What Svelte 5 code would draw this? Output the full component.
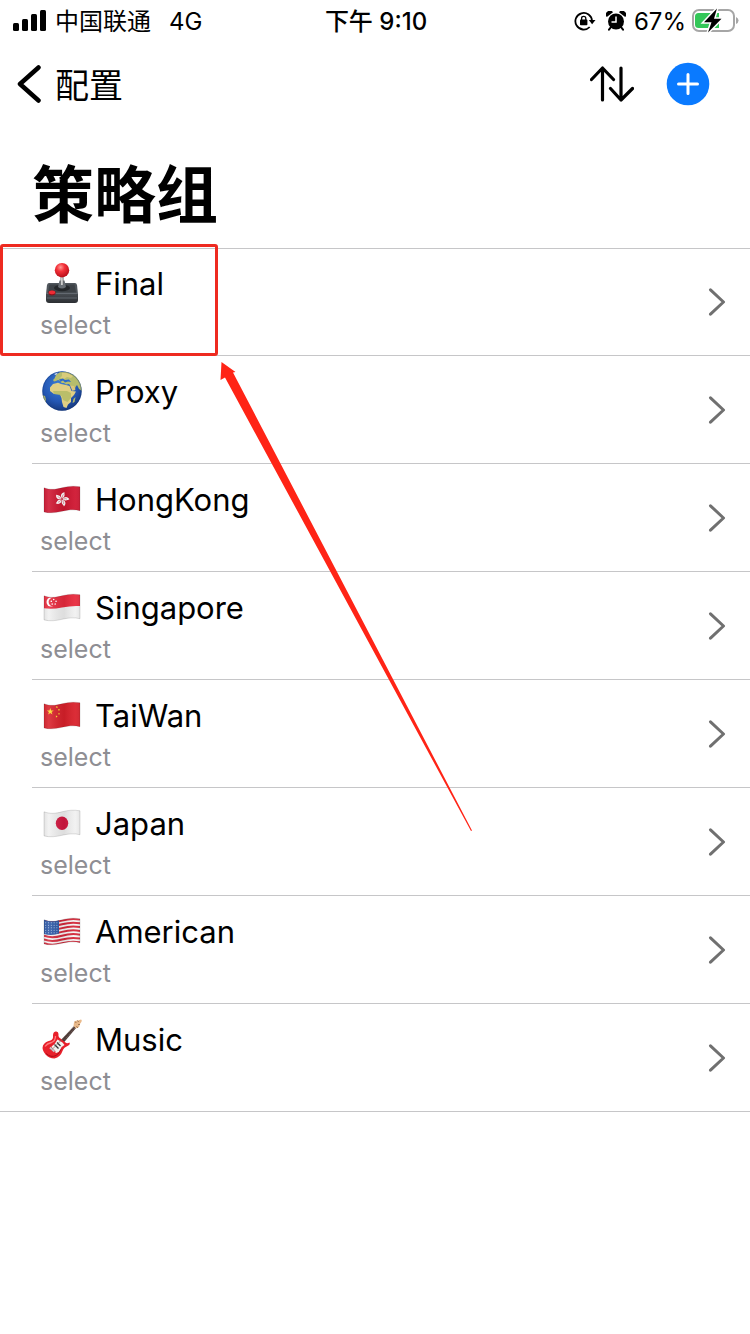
<script>
  const groups = [
    { name: 'Final', type: 'select', icon: 'joystick' },
    { name: 'Proxy', type: 'select', icon: 'globe' },
    { name: 'HongKong', type: 'select', icon: 'hk' },
    { name: 'Singapore', type: 'select', icon: 'sg' },
    { name: 'TaiWan', type: 'select', icon: 'cn' },
    { name: 'Japan', type: 'select', icon: 'jp' },
    { name: 'American', type: 'select', icon: 'us' },
    { name: 'Music', type: 'select', icon: 'guitar' }
  ];

  const flagShape =
    'M4 8.8C10 11.1 16 10.500 22 8.8S34 6.7 40 7.8V31.7C34 30.1 28 30.9 22 32.3S10 34.500 4 32.9Z';
  const star = 'M0-1L.24-.31L.95-.31L.38.12L.59.81L0 .4L-.59.81L-.38.12L-.95-.31L-.24-.31Z';
  const petals = [0, 72, 144, 216, 288];
  const stripes = [0, 1, 2, 3, 4, 5, 6];
  const starRows = [0, 1, 2, 3, 4];
  const starCols = [0, 1, 2, 3, 4];
</script>

{#snippet joystick()}
  <defs>
    <radialGradient id="ball" cx=".4" cy=".3" r=".7">
      <stop offset="0" stop-color="#ff9a94" />
      <stop offset=".4" stop-color="#f4323a" />
      <stop offset="1" stop-color="#b80d18" />
    </radialGradient>
    <linearGradient id="stick">
      <stop offset="0" stop-color="#777" />
      <stop offset=".45" stop-color="#eee" />
      <stop offset="1" stop-color="#666" />
    </linearGradient>
    <linearGradient id="front" x2="0" y2="1">
      <stop offset="0" stop-color="#4a4f55" />
      <stop offset="1" stop-color="#2c2f33" />
    </linearGradient>
  </defs>
  <path d="M9 20H35Q36.500 20 37 22L38 31H6L7 22Q7.500 20 9 20Z" fill="#50565c" />
  <path d="M9.500 21.500H34.500L36 29.500H8Z" fill="#3d4247" />
  <path d="M6 30H38V37Q38 40 35 40H9Q6 40 6 37Z" fill="url(#front)" />
  <path d="M6 30.500H38M7 35H37" stroke="#6b7178" stroke-width=".8" />
  <ellipse cx="22" cy="25" rx="8" ry="3.200" fill="#24272a" />
  <path d="M19.500 17.500H24.500L26 24Q22 27 18 24Z" fill="#686e74" />
  <path d="M20.500 12H23.500V22H20.500Z" fill="url(#stick)" />
  <circle cx="22" cy="7.200" r="7.200" fill="url(#ball)" />
  <ellipse cx="12" cy="30" rx="3.600" ry="2.400" fill="#8f1019" />
  <ellipse cx="12" cy="29.300" rx="3.200" ry="1.900" fill="#ef2c35" />
{/snippet}

{#snippet globe()}
  <defs>
    <radialGradient id="sea" cx=".45" cy=".35" r=".65">
      <stop offset="0" stop-color="#3d7fd6" />
      <stop offset=".65" stop-color="#2457b4" />
      <stop offset="1" stop-color="#173a80" />
    </radialGradient>
    <clipPath id="world"><circle cx="22" cy="20" r="19.700" /></clipPath>
  </defs>
  <circle cx="22" cy="20" r="19.700" fill="url(#sea)" />
  <g clip-path="url(#world)">
    <path d="M14.500 7.500L16 4L20 1L28 1L36 5L41 12L42 20L39 18L37 14L35.500 16L34.500 20L33 16L30.500 15L29 13L26 13.500L24 12L21.500 12L20.500 10L18 9L16 10L14 10.500L13 9Z" fill="#b6bd6c" />
    <path d="M22 1.500L28 2L33 5L31 7L27 6L24 8L20 7L22 5Z" fill="#d9cc7a" />
    <path d="M19 8.500L21 10.500L23 9.500L25 11.500L28 10.500L31 11L29 8.500L25 9L23 7.500Z" fill="#2b69c8" />
    <path d="M13 13L18 11.700L21 13L26 14L29.500 15L31.500 20L36 20.500L34 24L31 27L31 31L28 33.500L26.500 37L23.500 36L22 31L21.500 27L20 23.500L14 23L10 20L10 16.500Z" fill="#e0cf83" />
    <path d="M13 20L19 20L27 20L31 22L31 27L27.500 31L23 29L21.500 25L18 23.500L14 23Z" fill="#a9b65f" opacity=".7" />
    <path d="M30 14.500L34 15L35.500 18.500L32.500 20Z" fill="#ddc67a" />
    <path d="M2 24L5 25L6 29L5 34L2 31Z" fill="#b6bd6c" />
    <path d="M33.500 28L35.500 26L34.500 31L32.500 32Z" fill="#b6bd6c" />
    <path d="M14 3L18 1.500L16 4Z" fill="#e5eef4" />
  </g>
  <circle cx="22" cy="20" r="19.200" fill="none" stroke="#12356f" stroke-opacity=".35" />
{/snippet}

{#snippet guitar()}
  <path d="M20 22L34.500 6.500L36.500 8.500L23 24.500Z" fill="#4b3a37" />
  <path d="M22 20L35 7M25 20.500L35.500 8.300" stroke="#9a8279" stroke-width=".7" stroke-dasharray="1 1" />
  <path d="M33.500 7L34 3.500Q35 1 38 1.500L41 .5Q42.500 1 41 3.500L39.500 5.500Q40 8.500 37.500 8.500L36 9.500Z" fill="#e9b98a" />
  <path d="M35 2.500L36.300 4M37.500 1.500L38.600 3M40 5.500L38 5.600M38 9L36.500 7.200" stroke="#9b7350" stroke-width="1" />
  <path d="M15.500 12.500Q18.500 12 18.500 15Q18 18 20.500 19.500L25.500 23.500Q27 24.800 29.500 23.500Q30.500 25.500 27.500 27Q23.500 28.500 22.500 32Q20.500 38 14.500 39.500Q9 39.500 5.500 35.500Q1.500 30.500 3 26.500Q5 22.500 10.500 21.500Q13.500 20.500 13 16.500Q13 13 15.500 12.500Z" fill="#e8202b" />
  <path d="M5 27.500Q7 24.500 11.500 23.500Q15.500 22 15.500 17" fill="none" stroke="#ff7b7d" stroke-width="1.300" />
  <path d="M6 34.500Q11 39 16 36.500Q19.500 34.500 21 30" fill="none" stroke="#a80d17" stroke-width="1" />
  <path d="M17.500 20.500L22.500 23.500L24.500 26Q21 27.500 20 31Q18.500 34.500 15.500 34Q16 31.500 13 30L11.500 27.500Q15 25.500 17.500 20.500Z" fill="#f2f2ef" />
  <path d="M14.500 25.500L18.500 29.500M17 23.500L20.500 27" stroke="#333" stroke-width="1.300" />
  <path d="M10 28.500L14.500 32.500" stroke="#c5c8ca" stroke-width="2" />
  <path d="M12 30.500L23 19.500" stroke="#776b66" stroke-width=".7" />
{/snippet}

{#snippet flag(code)}
  <defs>
    <clipPath id="cloth-{code}"><path d={flagShape} /></clipPath>
    <linearGradient id="shade-{code}">
      <stop offset="0" stop-color="#000" stop-opacity=".1" />
      <stop offset=".2" stop-color="#fff" stop-opacity=".12" />
      <stop offset=".55" stop-color="#000" stop-opacity=".08" />
      <stop offset=".8" stop-color="#fff" stop-opacity=".06" />
      <stop offset="1" stop-color="#000" stop-opacity=".14" />
    </linearGradient>
  </defs>
  <g clip-path="url(#cloth-{code})">
    {#if code === 'hk'}
      <rect width="44" height="40" fill="#cf1530" />
      {#each petals as angle}
        <path d="M0-.6C-3-2.500-2.500-6.300.8-7.400C.3-5.700 3.300-4.200 0-.6Z" fill="#fff" transform="translate(22 20.200) rotate({angle + 15})" />
        <path d="M0-1.500Q-.9-3.500.2-5" fill="none" stroke="#cf1530" stroke-width=".4" transform="translate(22 20.200) rotate({angle + 15})" />
      {/each}
    {:else if code === 'sg'}
      <rect width="44" height="40" fill="#f1f1f1" />
      <path d="M0 0H44V19.500Q34 18 22 20.500T0 20.500Z" fill="#e8293c" />
      <circle cx="11" cy="15" r="4.500" fill="#fff" />
      <circle cx="12.800" cy="15" r="4.200" fill="#e8293c" />
      {#each petals as angle}
        <circle cx="0" cy="-2.500" r=".8" fill="#fff" transform="translate(13.700 15) rotate({angle})" />
      {/each}
    {:else if code === 'cn'}
      <rect width="44" height="40" fill="#d9202a" />
      <path d={star} fill="#ffde2e" transform="translate(10.300 16.500) scale(3.600)" />
      <path d={star} fill="#ffde2e" transform="translate(16.800 12.100) rotate(20) scale(1.300)" />
      <path d={star} fill="#ffde2e" transform="translate(19 14.800) rotate(40) scale(1.300)" />
      <path d={star} fill="#ffde2e" transform="translate(19 18.800) scale(1.300)" />
      <path d={star} fill="#ffde2e" transform="translate(16.600 21.500) rotate(20) scale(1.300)" />
    {:else if code === 'jp'}
      <rect width="44" height="40" fill="#f1f1f1" />
      <ellipse cx="22" cy="20.300" rx="6.200" ry="6.800" fill="#d2163f" />
    {:else}
      <rect width="44" height="40" fill="#f6f6f6" />
      {#each stripes as i}
        <path d="M4 8.800C10 11.100 16 10.500 22 8.800S34 6.700 40 7.800" transform="translate(0 {i * 3.8 + 0.7})" fill="none" stroke="#d5283a" stroke-width="2" />
      {/each}
      <path d="M4 7.500C10 10.500 14 10 19 9V22.500Q12 25 4 23Z" fill="#2b57a6" />
      {#each starRows as r}
        {#each starCols as c}
          <circle cx={5.7 + c * 2.8} cy={11.8 + r * 2.5} r=".5" fill="#c6d6f0" />
        {/each}
      {/each}
    {/if}
    <rect width="44" height="40" fill="url(#shade-{code})" />
  </g>
  <path d={flagShape} fill="none" stroke="#000" stroke-opacity=".16" stroke-width=".8" />
{/snippet}

<div class="screen">
  <header>
    <div class="status">
      <div class="carrier">
        <svg width="34" height="22" viewBox="0 0 34 22" aria-hidden="true">
          <rect y="13" width="6" height="8" rx="1.500" />
          <rect x="9" y="9" width="6" height="12" rx="1.500" />
          <rect x="18" y="4" width="6" height="17" rx="1.500" />
          <rect x="27" width="6" height="21" rx="1.500" />
        </svg>
        <span>中国联通</span>
        <span class="network">4G</span>
      </div>
      <time>下午 9:10</time>
      <div class="indicators">
        <svg width="22" height="20" viewBox="0 0 22 20" aria-hidden="true">
          <path d="M15.700 16A8.300 8.300 0 1 1 18 10" fill="none" stroke="#000" stroke-width="1.800" />
          <path d="M14.800 9H21.500L18.100 13.300Z" />
          <rect x="6" y="8.600" width="7.400" height="5.600" rx=".8" />
          <path d="M7.600 9V7.400Q7.600 5.300 9.700 5.300T11.800 7.400V9" fill="none" stroke="#000" stroke-width="1.300" />
        </svg>
        <svg class="alarm" width="20" height="20" viewBox="0 0 20 20" aria-hidden="true">
          <circle cx="10" cy="10.500" r="8" />
          <path d="M.8 6A3.600 3.600 0 0 1 7 1.200ZM19.200 6A3.600 3.600 0 0 0 13 1.200Z" />
          <path d="M5 16L3 18.600M15 16L17 18.600" stroke="#000" stroke-width="2" stroke-linecap="round" />
          <path d="M10 5.500V11H5.500" fill="none" stroke="#fff" stroke-width="1.500" />
        </svg>
        <span class="charge">67%</span>
        <svg width="48" height="26" viewBox="0 0 48 26" aria-hidden="true">
          <rect x="2" y="2" width="41" height="21" rx="6" fill="#fff" stroke="#a6a6a6" stroke-width="2" />
          <path d="M7.500 5H28V20H7.500Q4 20 4 16.500V8.500Q4 5 7.500 5Z" fill="#34c759" />
          <path d="M45 9Q47.500 10 47.500 12.500T45 16Z" fill="#a6a6a6" />
          <path d="M26 .5L13 14.300H20.500L17 24.500L30.500 10.700H23Z" stroke="#fff" stroke-width="3" paint-order="stroke" />
        </svg>
      </div>
    </div>
    <nav>
      <a class="back" href="#config">
        <svg width="24" height="38" viewBox="0 0 24 38" aria-hidden="true">
          <path d="M21.500 2.500L3 19L21.500 35.500" fill="none" stroke="#000" stroke-width="4.500" stroke-linecap="round" stroke-linejoin="round" />
        </svg>
        <span>配置</span>
      </a>
      <div class="actions">
        <button type="button" aria-label="排序">
          <svg width="44" height="36" viewBox="0 0 44 36">
            <path d="M1.500 13.500L12.500 2L23.500 13.500M12.500 2V34M31 2V34M20.500 22.500L31 34L42.500 22.500" fill="none" stroke="#000" stroke-width="3.200" stroke-linecap="round" stroke-linejoin="round" />
          </svg>
        </button>
        <button type="button" aria-label="添加">
          <svg width="44" height="44" viewBox="0 0 44 44">
            <circle cx="22" cy="22" r="21.300" fill="#0a7aff" />
            <path d="M12.500 22H31.500M22 12.500V31.500" stroke="#fff" stroke-width="3" stroke-linecap="round" />
          </svg>
        </button>
      </div>
    </nav>
    <h1>策略组</h1>
  </header>

  <main>
    <ul>
      {#each groups as group}
        <li>
          <a href="#{group.name}">
            <span class="text">
              <span class="name">
                <svg width="44" height="40" viewBox="0 0 44 40" aria-hidden="true">
                  {#if group.icon === 'joystick'}
                    {@render joystick()}
                  {:else if group.icon === 'globe'}
                    {@render globe()}
                  {:else if group.icon === 'guitar'}
                    {@render guitar()}
                  {:else}
                    {@render flag(group.icon)}
                  {/if}
                </svg>
                {group.name}
              </span>
              <span class="type">{group.type}</span>
            </span>
            <svg width="18" height="28" viewBox="0 0 18 28" aria-hidden="true">
              <path d="M2.500 1.800L15.500 14L2.500 26.200" fill="none" stroke="#707070" stroke-width="3" stroke-linecap="round" stroke-linejoin="round" />
            </svg>
          </a>
        </li>
      {/each}
    </ul>
    <div class="highlight"></div>
    <svg class="pointer" width="252" height="470" viewBox="0 0 252 470" aria-hidden="true">
      <path d="M1.500 0L15.500 10L13 10.500L252 468.500L251 469L5 15.500L.5 18Z" fill="#ff2416" />
    </svg>
  </main>
</div>

<style>
  :global(body) {
    margin: 0;
    background: #fff;
  }

  .screen {
    min-height: 100vh;
    background: #fff;
    color: #000;
    font-family: Inter, 'Noto Sans CJK SC', sans-serif;
  }

  .status {
    display: grid;
    grid-template-columns: 1fr auto 1fr;
    align-items: center;
    height: 40px;
    padding: 0 11px 0 13px;
    font-size: 24px;
    line-height: 40px;
  }

  .carrier,
  .indicators {
    display: flex;
    align-items: center;
  }

  .carrier {
    gap: 8px;
  }

  .network {
    margin-left: 10px;
  }

  time {
    font-weight: 500;
  }

  .status span,
  time {
    padding-top: 2px;
  }

  .indicators {
    justify-content: flex-end;
    gap: 5px;
  }

  .alarm {
    margin-left: 5px;
  }

  .charge {
    margin-left: 3px;
  }

  nav {
    display: flex;
    align-items: center;
    justify-content: space-between;
    height: 88px;
    padding: 0 40px 0 17px;
  }

  .back,
  .actions {
    display: flex;
    align-items: center;
  }

  .back {
    gap: 14px;
    color: inherit;
    font-size: 34px;
    line-height: 48px;
    text-decoration: none;
  }

  .back span {
    padding-top: 4px;
  }

  .actions {
    gap: 32px;
  }

  button {
    display: flex;
    padding: 0;
    border: 0;
    background: none;
  }

  h1 {
    margin: 0;
    padding: 28px 32px 12px;
    font-size: 62px;
    font-weight: 700;
    line-height: 80px;
  }

  main {
    position: relative;
  }

  ul {
    margin: 0;
    padding: 0;
    border: solid #c6c6c8;
    border-width: 1px 0;
    list-style: none;
  }

  li {
    margin-left: 32px;
    border-bottom: 1px solid #c6c6c8;
  }

  li:last-child {
    border-bottom: 0;
  }

  li a {
    display: flex;
    align-items: center;
    justify-content: space-between;
    padding: 15px 24px 14px 8px;
    color: inherit;
    text-decoration: none;
  }

  li:first-child a {
    padding-top: 14px;
  }

  .text {
    display: flex;
    flex-direction: column;
    gap: 4px;
  }

  .name {
    display: flex;
    align-items: flex-start;
    gap: 11px;
    font-size: 31px;
    line-height: 42px;
  }

  .type {
    color: #8e8e93;
    font-size: 25px;
    line-height: 32px;
  }

  .highlight {
    position: absolute;
    top: -4px;
    left: 0;
    box-sizing: border-box;
    width: 218px;
    height: 112px;
    border: 3px solid #ee2a20;
    border-radius: 3px;
  }

  .pointer {
    position: absolute;
    top: 114px;
    left: 220px;
    pointer-events: none;
  }
</style>
